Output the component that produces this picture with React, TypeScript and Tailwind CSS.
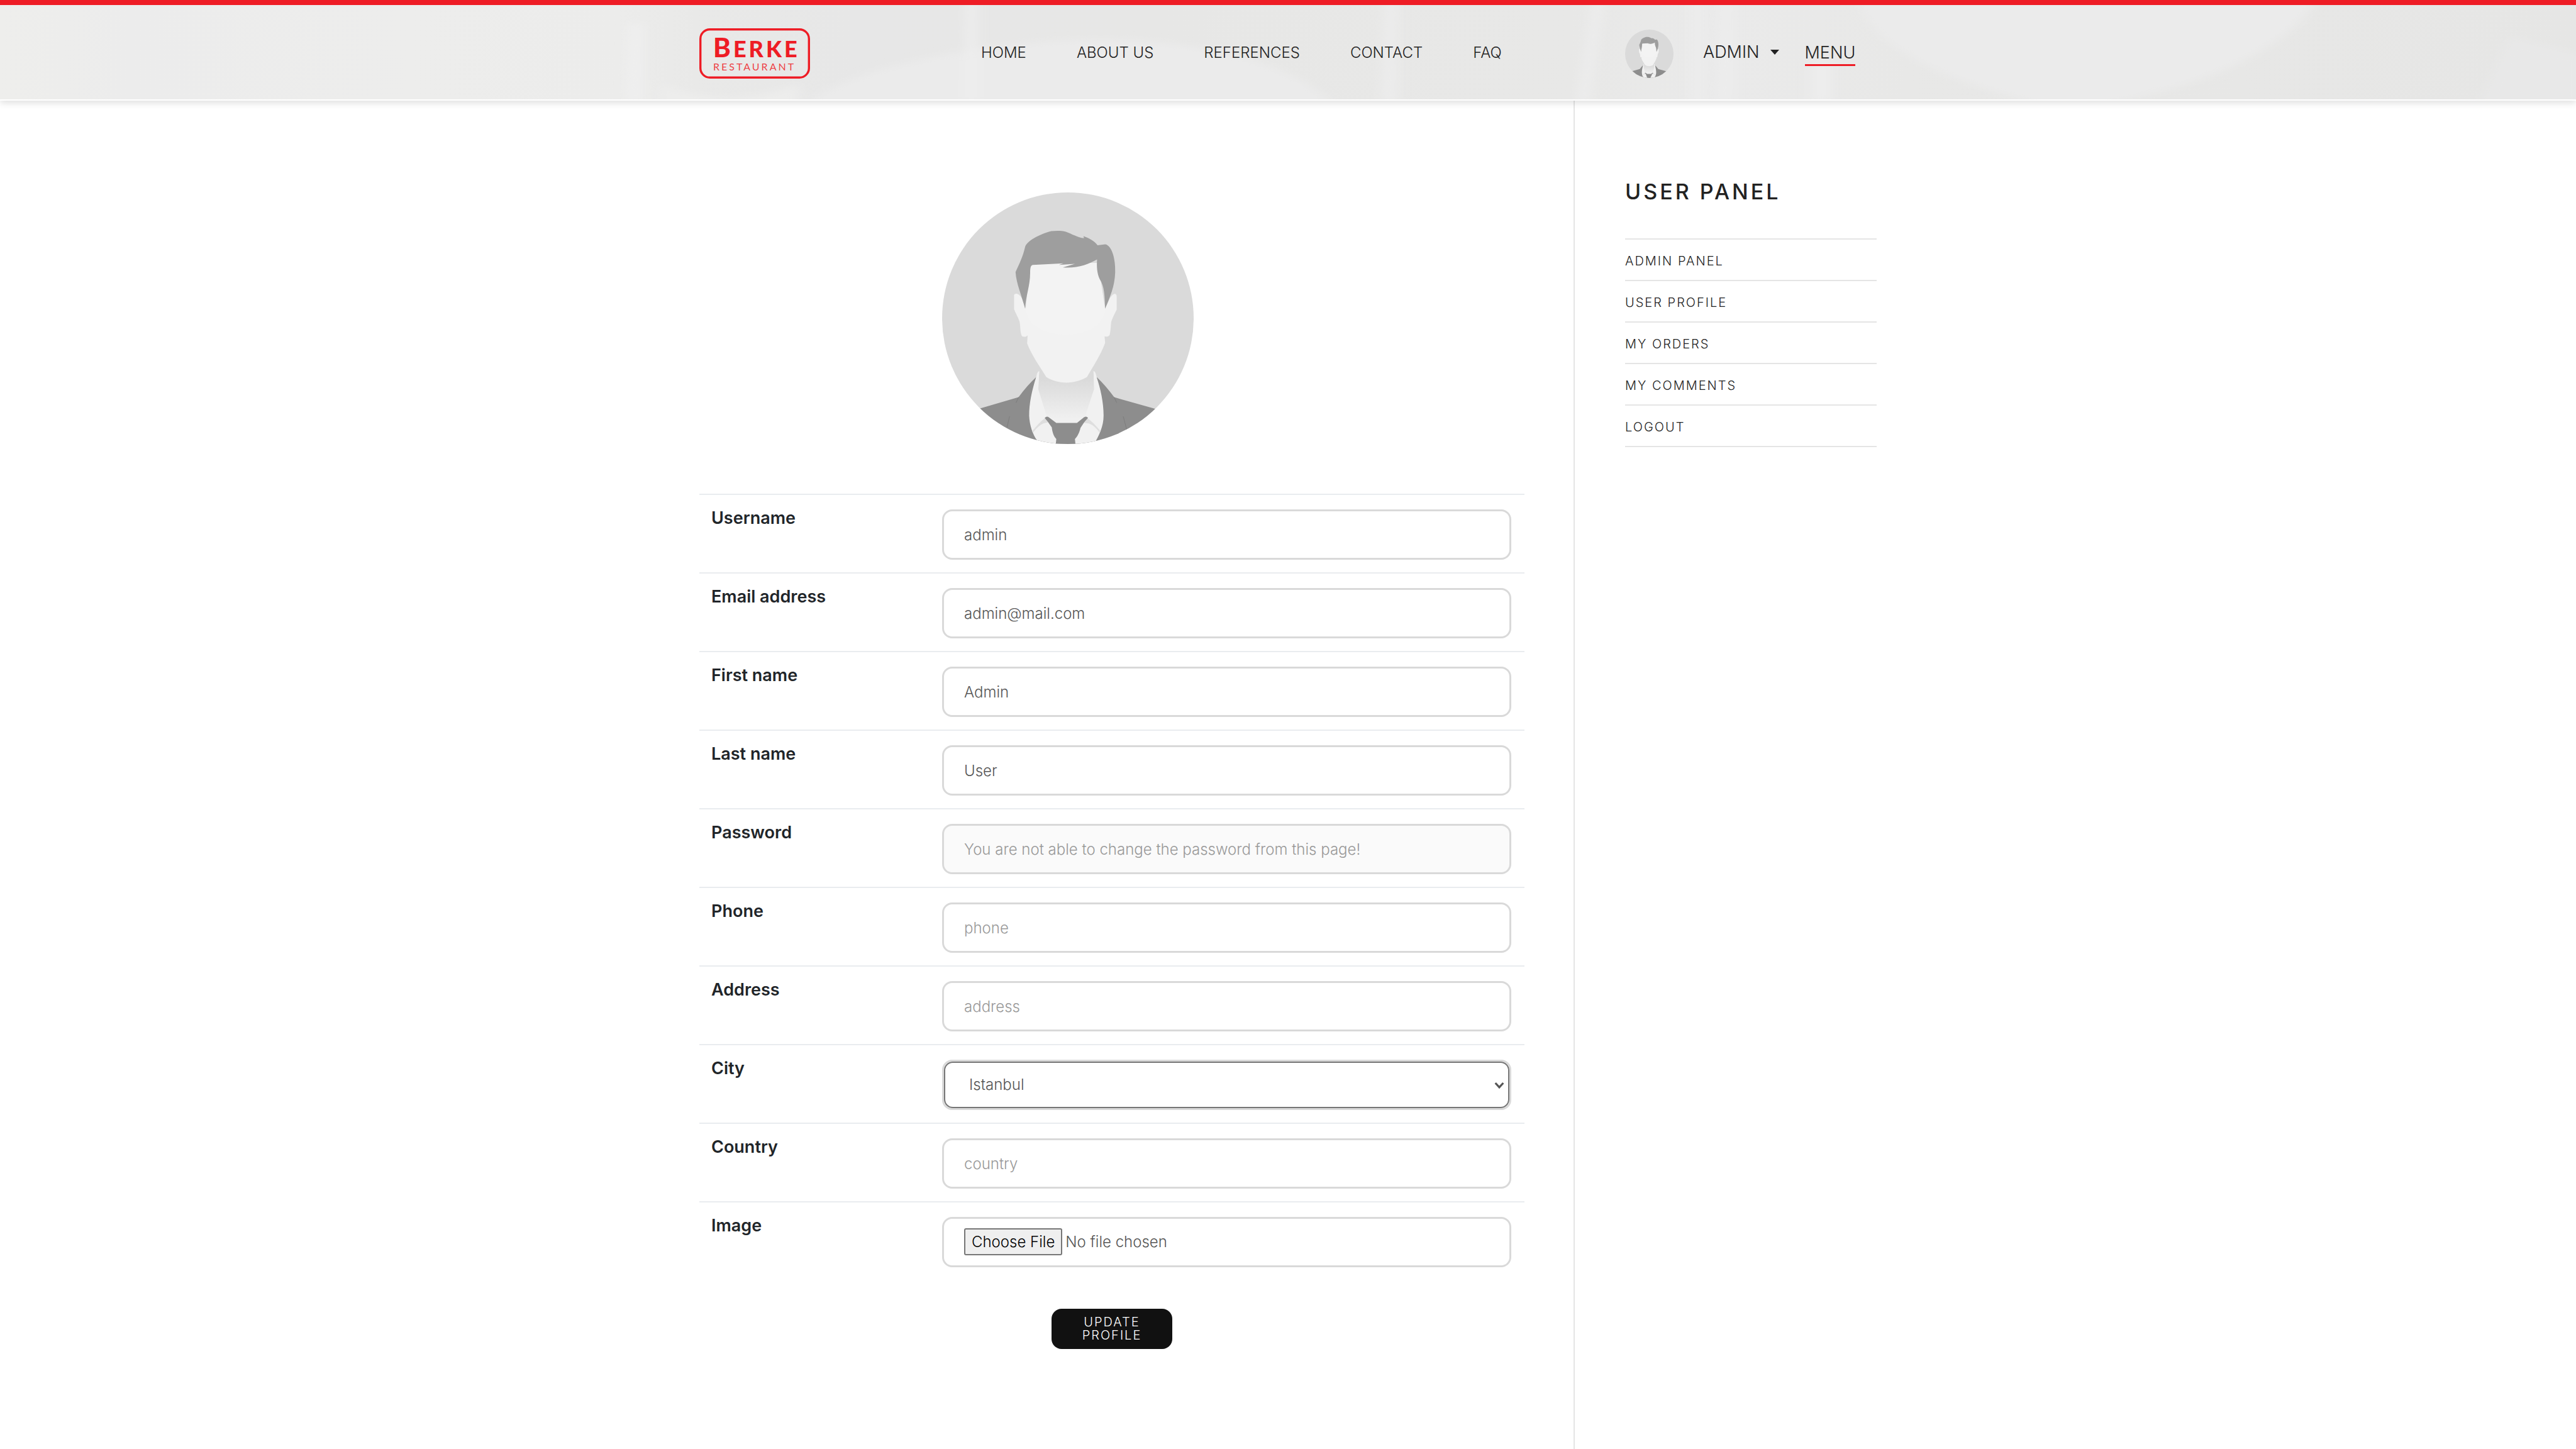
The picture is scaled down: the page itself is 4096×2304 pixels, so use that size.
import React from "react";

const nav = ["Home", "About us", "References", "Contact", "Faq"];
const panel = ["Admin panel", "User profile", "My orders", "My comments", "Logout"];

type Field = {
  id: string;
  label: string;
  kind?: "text" | "select" | "file";
  value?: string;
  placeholder?: string;
  disabled?: boolean;
};

const fields: Field[] = [
  { id: "username", label: "Username", value: "admin" },
  { id: "email", label: "Email address", value: "admin@mail.com" },
  { id: "first", label: "First name", value: "Admin" },
  { id: "last", label: "Last name", value: "User" },
  { id: "password", label: "Password", placeholder: "You are not able to change the password from this page!", disabled: true },
  { id: "phone", label: "Phone", placeholder: "phone" },
  { id: "address", label: "Address", placeholder: "address" },
  { id: "city", label: "City", kind: "select", value: "Istanbul" },
  { id: "country", label: "Country", placeholder: "country" },
  { id: "image", label: "Image", kind: "file" },
];

function Avatar({ id, className }: { id: string; className: string }) {
  return (
    <svg viewBox="0 0 500 500" className={className} role="img" aria-label="Profile picture">
      <defs>
        <clipPath id={id + "-c"}>
          <circle cx="250" cy="250" r="250" />
        </clipPath>
        <linearGradient id={id + "-g"} x1="0" y1="370" x2="0" y2="450" gradientUnits="userSpaceOnUse">
          <stop offset="0" stopColor="#dadada" />
          <stop offset="1" stopColor="#f0f0f0" />
        </linearGradient>
      </defs>
      <g clipPath={`url(#${id}-c)`}>
        <rect width="500" height="500" fill="#dadada" />
        <path d="M70 431 L152 407 C164 391 175 378 187 367 L250 440 L307 367 C320 379 332 393 342 407 L430 432 L430 500 L70 500Z" fill="#8d8d8d" />
        <path d="M193 355 L187 367 C178 395 173 420 173 444 C174 463 180 481 189 493 L192 500 H302 C312 483 321 465 321 443 C321 418 315 390 307 367 L302 355 C290 375 210 375 193 355Z" fill="#f1f1f1" />
        <path d="M193 355 C210 340 290 340 301 355 L302 391 L286 440 C290 445 280 448 268 458 L227 458 L208 445 L191 391Z" fill={`url(#${id}-g)`} />
        <path d="M193 355 C188 356 187 368 186 378 L191 393Z M301 355 C306 356 307 366 309 378 L303 391Z" fill="#f1f1f1" />
        <path d="M205 450 C196 457 187 467 180 476 L182 473 C193 461 199 457 208 456Z M288 450 C296 455 306 466 314 476 L311 472 C300 460 294 457 285 457Z" fill="#dedede" stroke="#dedede" strokeWidth="3" />
        <path d="M204 448 Q208 444 212 447 L227 458 H268 L282 447 Q287 444 290 448 C283 455 279 462 275 468 C273 477 269 485 264 490 L265 500 H226 L227 490 C221 484 219 475 218 467 C214 461 209 454 204 448Z" fill="#8d8d8d" />
        <path d="M143 204 C145 199 153 200 159 211 L166 231 H324 L333 211 C340 199 347 199 347 207 L347 233 C343 241 338 250 336 258 C335 268 335 276 333 283 C331 287 326 287 323 286 L324 299 C315 324 299 347 288 367 C276 374 262 378 247 378 C232 378 218 374 207 367 C194 345 178 324 169 300 L170 284 C167 288 162 287 159 286 C155 280 156 268 154 257 C151 248 146 240 143 232Z" fill="#f2f2f2" />
        <path d="M175 140 H310 L324 231 C322 300 170 300 166 231Z" fill="#f3f3f3" />
        <path d="M165 231 C159 207 147 180 146 158 C154 141 161 126 165 108 C169 97 191 84 217 77 C226 76 238 76 246 78 C259 83 269 89 282 91 L281 87 C292 91 302 96 309 105 L324 103 C336 104 345 129 344 159 C343 187 334 207 324 231 C323 204 323 188 313 172 C308 160 307 148 308 133 C290 143 270 151 240 149 L264 142 L232 144 L241 141 L180 144 C176 145 175 150 175 160 C175 186 166 206 165 231Z" fill="#9e9e9e" />
        <path d="M134 445 L129 467 M360 445 L367 472 M152 407 L147 418 M342 407 L347 418" stroke="#7c7c7c" strokeWidth="1.2" fill="none" />
      </g>
    </svg>
  );
}

function Logo() {
  return (
    <svg viewBox="0 0 176 80" className="h-20 w-44" role="img" aria-label="Berke Restaurant">
      <rect x="1.7" y="1.7" width="172.6" height="76.6" rx="15" fill="none" stroke="#ee1c25" strokeWidth="3.4" />
      <g fill="#ee1c25" fontFamily="Lato, sans-serif">
        <text x="22" y="46" fontWeight="900" letterSpacing="4">
          <tspan fontSize="42">B</tspan>
          <tspan fontSize="36">ERKE</tspan>
        </text>
        <text x="22" y="67" fontSize="16" letterSpacing="3" fillOpacity="0.85">RESTAURANT</text>
      </g>
    </svg>
  );
}

function Backdrop() {
  return (
    <svg viewBox="0 0 4096 150" preserveAspectRatio="none" className="absolute inset-0 h-full w-full" aria-hidden="true">
      <defs>
        <linearGradient id="bd" x1="0" x2="1" y1="0" y2="0">
          <stop offset="0" stopColor="#eeeeec" />
          <stop offset="0.05" stopColor="#ececec" />
          <stop offset="0.16" stopColor="#ededec" />
          <stop offset="0.24" stopColor="#ececeb" />
          <stop offset="0.27" stopColor="#e9e9e8" />
          <stop offset="0.33" stopColor="#e7e7e7" />
          <stop offset="0.45" stopColor="#e7e7e6" />
          <stop offset="0.61" stopColor="#e8e8e7" />
          <stop offset="0.67" stopColor="#eaeaea" />
          <stop offset="0.74" stopColor="#e8e8e7" />
          <stop offset="1" stopColor="#e6e6e5" />
        </linearGradient>
        <filter id="soft" x="-10%" y="-10%" width="120%" height="120%">
          <feGaussianBlur stdDeviation="9 6" />
        </filter>
      </defs>
      <rect width="4096" height="150" fill="url(#bd)" />
      <g filter="url(#soft)">
        <path d="M1290 150 C1380 90 1600 55 1750 55 C1950 55 2080 110 2120 160 H1290Z" fill="#ebebeb" />
        <path d="M2950 -20 H3690 C3650 60 3520 130 3330 160 H3250 C3060 110 2970 60 2950 -20Z" fill="#ebebeb" />
        <path d="M3940 160 L3990 50 L4110 80 V160Z" fill="#e8e8e8" />
        <path d="M1050 125 Q1160 170 1270 125 V165 H1050Z" fill="#ededec" />
        <path d="M1000 30 H1022 V155 H996Z" fill="#efefef" />
        <path d="M1538 -10 H1552 V155 H1536Z" fill="#eeeeee" />
        <path d="M2202 -10 H2222 V155 H2196Z" fill="#ececec" />
        <path d="M2534 -10 H2550 L2526 155 H2508Z M2690 -10 H2708 V155 H2690Z M2736 -10 H2754 V155 H2732Z M2880 90 H2912 V155 H2880Z" fill="#ededed" />
      </g>
    </svg>
  );
}

const box = "h-20 w-full rounded-2xl border-[3px] border-[#d9d9d9] text-2xl font-light text-[#555]";

function Control({ f }: { f: Field }) {
  if (f.kind === "select") {
    return (
      <div className="relative h-20 rounded-2xl border-[3px] border-[#d9d9d9]">
        <select id={f.id} defaultValue={f.value} className="block h-full w-full appearance-none rounded-[14px] border-2 border-[#767676] bg-white px-[38px] text-2xl font-light text-[#555]">
          <option>Istanbul</option>
        </select>
        <svg viewBox="0 0 14 10" className="pointer-events-none absolute top-8 right-2 h-3 w-4" aria-hidden="true">
          <path d="M1.5 1.5 L7 7.5 L12.5 1.5" fill="none" stroke="#555" strokeWidth="2.8" />
        </svg>
      </div>
    );
  }
  if (f.kind === "file") {
    return (
      <input
        id={f.id}
        type="file"
        className={box + " block bg-white px-8 py-[15px] file:mr-[5px] file:h-[43px] file:rounded-[3px] file:border-2 file:border-solid file:border-[#767676] file:bg-[#efefef] file:px-[10px] file:text-2xl file:font-light file:text-black"}
      />
    );
  }
  return (
    <input
      id={f.id}
      type="text"
      defaultValue={f.value}
      placeholder={f.placeholder}
      disabled={f.disabled}
      className={box + " block bg-white px-8 placeholder:text-[#999] disabled:bg-[#fafafa]"}
    />
  );
}

export default function App() {
  return (
    <div className="flex min-h-screen flex-col bg-white font-['Inter',sans-serif] text-[#222]">
      <header className="relative z-10 border-t-8 border-b-2 border-t-[#ee1c25] border-b-white shadow-[0_4px_10px_rgba(0,0,0,0.12)]">
        <Backdrop />
        <div className="relative mx-auto flex h-[150px] w-[1872px] max-w-full items-center pt-1">
          <a href="#home" className="w-[448px]">
            <Logo />
          </a>
          <nav className="flex flex-1 gap-20 pb-[2px] text-2xl font-light uppercase">
            {nav.map((n) => (
              <a key={n} href="#nav">{n}</a>
            ))}
          </nav>
          <div className="flex w-[400px] items-center text-[27px] leading-9 font-light uppercase">
            <Avatar id="small" className="mr-[47px] size-[77px]" />
            <button type="button" className="mr-10 flex items-center gap-4 pb-1 uppercase">
              Admin
              <svg viewBox="0 0 14 8" className="h-2 w-4" aria-hidden="true">
                <path d="M0 0 H14 L7 8Z" fill="#222" />
              </svg>
            </button>
            <a href="#menu" className="border-b-[3px] border-[#ee1c25]">Menu</a>
          </div>
        </div>
      </header>

      <div className="mx-auto flex w-[1872px] max-w-full flex-1">
        <main className="flex-1 pt-[146px] pr-[78px]">
          <div className="flex justify-center pr-[141px]">
            <Avatar id="large" className="size-[400px]" />
          </div>
          <form className="mt-[79px]" onSubmit={(e) => e.preventDefault()}>
            {fields.map((f) => (
              <div key={f.id} className="flex border-t-2 border-[#e9ecef] pt-[23px] pr-[21px] pb-5 pl-[19px]">
                <label htmlFor={f.id} className="w-[367px] text-[27px] leading-7 font-semibold text-[#212529]">
                  {f.label}
                </label>
                <div className="flex-1">
                  <Control f={f} />
                </div>
              </div>
            ))}
            <div className="flex justify-center pt-[46px] pb-20">
              <button type="submit" className="h-16 w-48 rounded-2xl bg-[#111] px-8 text-xl leading-[21px] font-light tracking-[2px] text-white uppercase">
                Update profile
              </button>
            </div>
          </form>
        </main>
        <aside className="w-[482px] border-l-2 border-[#e5e5e5] pt-[121px] pl-20">
          <h2 className="mb-[50px] text-[34px] leading-[48px] font-medium tracking-[4px] uppercase">User panel</h2>
          <ul className="border-t-2 border-[#e5e5e5]">
            {panel.map((p) => (
              <li key={p} className="border-b-2 border-[#e5e5e5]">
                <a href="#panel" className="block pt-1 text-xl leading-[60px] font-light tracking-[2px] uppercase">{p}</a>
              </li>
            ))}
          </ul>
        </aside>
      </div>
    </div>
  );
}
